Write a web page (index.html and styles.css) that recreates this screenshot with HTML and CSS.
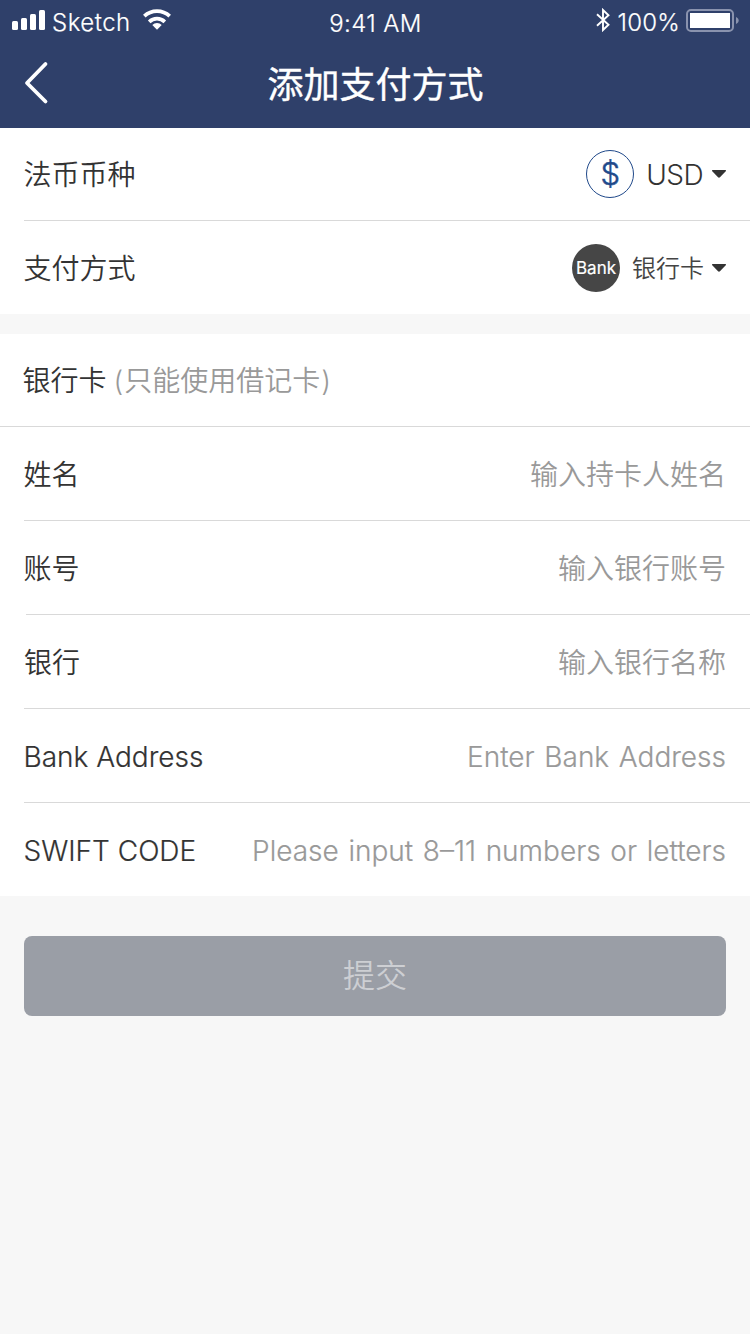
FILE: index.html
```
<!DOCTYPE html>
<html lang="zh-CN">
<head>
<meta charset="utf-8">
<title>添加支付方式</title>
<link rel="stylesheet" href="styles.css">
</head>
<body>
<header class="header">
  <div class="status">
    <div class="status-left">
      <svg class="signal" width="34" height="20" viewBox="0 0 34 20" fill="#fff"><rect x="0" y="11" width="6" height="9" rx="1.5"/><rect x="9" y="8" width="6" height="12" rx="1.5"/><rect x="18" y="4" width="6" height="16" rx="1.5"/><rect x="27" y="0" width="6" height="20" rx="1.5"/></svg>
      <span class="carrier">Sketch</span>
      <svg class="wifi" width="28" height="21" viewBox="0 0 28 21" fill="none" stroke="#fff" stroke-width="3.7"><path d="M1.300 7.200a18.500 18.500 0 0 1 25.400 0"/><path d="M6.200 12.800a11.200 11.200 0 0 1 15.600 0"/><path d="M14 20.800l-4.700-4.800a6.800 6.800 0 0 1 9.400 0z" fill="#fff" stroke="none"/></svg>
    </div>
    <span class="time">9:41 AM</span>
    <div class="status-right">
      <svg class="bluetooth" width="15" height="24" viewBox="0 0 15 24" fill="none" stroke="#fff" stroke-width="1.900"><path d="M1 6.300l11.500 10.400L7 22V2l5.500 5.300L1 17.700"/></svg>
      <span class="percent">100%</span>
      <svg class="battery" width="54" height="24" viewBox="0 0 54 24"><rect x="1" y="1" width="46" height="21" rx="4" fill="none" stroke="#8a93ae" stroke-width="2"/><rect x="4" y="4" width="40" height="15" fill="#fff"/><path d="M50 8c3.600 1.500 3.600 5.500 0 7z" fill="#8a93ae"/></svg>
    </div>
  </div>
  <nav class="nav">
    <svg class="back" width="26" height="44" viewBox="0 0 26 44" fill="none" stroke="#fff" stroke-width="3.800" stroke-linecap="round" stroke-linejoin="round"><path d="M21.500 3L3 22l18.500 18.500"/></svg>
    <h1 class="title">添加支付方式</h1>
  </nav>
</header>
<main>
  <section class="group">
    <div class="row first">
      <span class="label">法币币种</span>
      <div class="select"><span class="badge dollar">$</span><span class="currency">USD</span><svg class="caret" width="14" height="8" viewBox="0 0 14 8"><path d="M1 0h12q2 0 .5 1.500L8.200 7q-1.200 1.300-2.400 0L.5 1.500Q-1 0 1 0z" fill="#333"/></svg></div>
    </div>
    <div class="row">
      <span class="label">支付方式</span>
      <div class="select"><span class="badge bank">Bank</span><span class="method">银行卡</span><svg class="caret" width="14" height="8" viewBox="0 0 14 8"><path d="M1 0h12q2 0 .5 1.500L8.200 7q-1.200 1.300-2.400 0L.5 1.500Q-1 0 1 0z" fill="#333"/></svg></div>
    </div>
  </section>
  <section class="group">
    <div class="row first heading"><span class="label">银行卡</span><span class="note">(<span class="note-text">只能使用借记卡</span>)</span></div>
    <div class="row full"><span class="label">姓名</span><span class="hint">输入持卡人姓名</span></div>
    <div class="row"><span class="label">账号</span><span class="hint">输入银行账号</span></div>
    <div class="row inset"><span class="label">银行</span><span class="hint">输入银行名称</span></div>
    <div class="row latin"><span class="label">Bank Address</span><span class="hint">Enter Bank Address</span></div>
    <div class="row latin"><span class="label">SWIFT CODE</span><span class="hint">Please input 8–11 numbers or letters</span></div>
  </section>
  <button class="submit" type="button" disabled>提交</button>
</main>
</body>
</html>
```
FILE: styles.css
```
* { box-sizing: border-box; }
body {
  margin: 0;
  min-height: 1334px;
  background: #f7f7f7;
  color: #333;
  font-family: Inter, "Noto Sans CJK SC", sans-serif;
  font-size: 28px;
  font-weight: 350;
  line-height: 40px;
}
svg { display: block; flex: none; }
span { white-space: nowrap; }
.header { height: 128px; background: #2f406a; color: #fff; }
.status {
  display: grid;
  grid-template-columns: 1fr auto 1fr;
  height: 40px;
  padding: 0 10px 0 12px;
  font-size: 24px;
  font-weight: 300;
  -webkit-text-stroke: .2px #fff;
}
.status-left, .status-right { display: flex; align-items: flex-start; }
.status-right { justify-content: flex-end; }
.signal { margin-top: 10px; }
.carrier { margin: 3px 0 0 6px; letter-spacing: .5px; }
.wifi { margin: 9px 0 0 12px; }
.time { margin: 4px 0 0 -1px; letter-spacing: .4px; }
.bluetooth { margin-top: 8px; }
.percent { margin: 3px 6px 0 7px; letter-spacing: .2px; }
.battery { margin-top: 9px; }
.nav {
  display: grid;
  grid-template-columns: 60px 1fr 60px;
  align-items: center;
  height: 88px;
}
.back { margin-left: 24px; margin-top: -2px; }
.title { margin: 2px 0 0 1px; text-align: center; font-size: 36px; font-weight: 400; line-height: 50px; -webkit-text-stroke: .4px #fff; }
.group { background: #fff; margin-bottom: 20px; }
.row {
  display: flex;
  align-items: center;
  justify-content: space-between;
  height: 94px;
  margin-left: 24px;
  padding-right: 24px;
  border-top: 1px solid #d9d9d9;
}
.row.first { height: 92px; border-top: 0; }
.row.full { margin-left: 0; padding-left: 24px; }
.row.inset { margin-left: 26px; }
.row.inset .label { margin-left: -2px; }
.row.heading { margin-left: 23px; justify-content: flex-start; gap: 8px; }
.label, .note, .hint, .method { padding-top: 2px; }
.label { margin-left: -.5px; }
.note, .hint { color: #999; }
.note { margin-left: -1px; }
.note-text { margin: 0 1px; }
.latin { font-weight: 300; -webkit-text-stroke: .2px currentColor; }
.latin .hint { word-spacing: 1.800px; }
.select { display: flex; align-items: center; }
.badge {
  display: flex;
  align-items: center;
  justify-content: center;
  width: 48px;
  height: 48px;
  margin-right: 12px;
  border-radius: 50%;
}
.dollar { border: 1px solid #20498a; color: #20498a; font-size: 31px; font-weight: 300; -webkit-text-stroke: .5px #20498a; }
.bank { background: #464646; color: #fff; font-size: 17px; font-weight: 400; -webkit-text-stroke: .2px #fff; }
.currency { margin-right: 9px; padding-top: 1px; font-weight: 300; letter-spacing: -.6px; }
.method { margin-right: 8px; font-size: 24px; color: #444; }
.submit {
  display: block;
  width: 702px;
  height: 80px;
  margin: 40px auto 0;
  padding: 0;
  border: 0;
  border-radius: 8px;
  background: #9a9ea6;
  color: #cdcfd3;
  font: 350 32px/44px Inter, "Noto Sans CJK SC", sans-serif;
}
```
